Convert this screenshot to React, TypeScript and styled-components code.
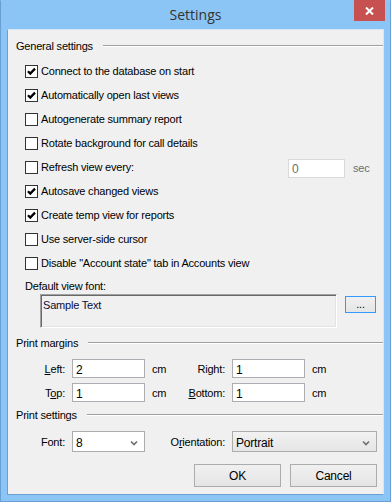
import React from "react";
import styled, { createGlobalStyle } from "styled-components";

const GlobalStyle = createGlobalStyle`
  html, body {
    margin: 0;
    padding: 0;
    background: #ffffff;
  }
  body {
    font-family: "Liberation Sans", Arial, sans-serif;
    font-size: 11px;
    letter-spacing: -0.2px;
    color: #000;
  }
`;

const Window = styled.div`
  width: 391px;
  height: 502px;
  box-sizing: border-box;
  display: flex;
  flex-direction: column;
  background: #8bc5f6;
  border: 1px solid #6a9fd6;
  border-top-color: #8bc5f6;
  padding: 0 6px 6px 6px;
`;

const TitleBar = styled.div`
  height: 28px;
  display: flex;
  align-items: center;
`;

const TitleSide = styled.div`
  flex: 1 1 0;
  align-self: stretch;
  display: flex;
  justify-content: flex-end;
  align-items: flex-start;
`;

const Title = styled.div`
  font-family: "Open Sans", "Noto Sans", sans-serif;
  font-size: 14px;
  letter-spacing: 0;
  color: #333333;
  padding-bottom: 1px;
`;

const CloseButton = styled.div`
  flex: 0 0 31px;
  min-width: 31px;
  height: 21px;
  margin-top: -1px;
  margin-right: -1px;
  background: #c75050;
  display: flex;
  align-items: center;
  justify-content: center;
`;

const Client = styled.div`
  flex: 1;
  display: flex;
  flex-direction: column;
  background: #f0f0f0;
  border: 1px solid;
  border-color: #d8e6f3 #d8e6f3 #6a9fd6 #6a9fd6;
  padding: 9px 0 0 8px;
`;

const HeaderRow = styled.div<{ $top?: number }>`
  display: flex;
  align-items: center;
  gap: 10px;
  height: 13px;
  margin-top: ${(p) => p.$top ?? 0}px;
`;

const GroupLine = styled.div`
  flex: 1;
  height: 1px;
  background: #a0a0a0;
  border-bottom: 1px solid #ffffff;
  margin-top: 1px;
`;

function GroupHeader({ label, top }: { label: string; top?: number }) {
  return (
    <HeaderRow $top={top}>
      <span>{label}</span>
      <GroupLine />
    </HeaderRow>
  );
}

const CheckList = styled.div`
  margin-top: 7px;
  padding-left: 9px;
  display: flex;
  flex-direction: column;
`;

const CheckRow = styled.div`
  display: flex;
  align-items: center;
  height: 24px;
`;

const Box = styled.span`
  width: 13px;
  height: 13px;
  box-sizing: border-box;
  border: 1px solid #333333;
  background: #ffffff;
  display: flex;
  align-items: center;
  justify-content: center;
  margin-right: 3px;
  flex-shrink: 0;
`;

function CheckBox({ checked }: { checked: boolean }) {
  return (
    <Box>
      {checked && (
        <svg width="11" height="11" viewBox="0 0 11 11">
          <polyline
            points="2,5.2 4.3,7.6 9,2.6"
            fill="none"
            stroke="#000"
            strokeWidth="2.3"
          />
        </svg>
      )}
    </Box>
  );
}

const TextBox = styled.div<{ $width: number; $disabled?: boolean }>`
  width: ${(p) => p.$width}px;
  height: 19px;
  box-sizing: border-box;
  border: 1px solid ${(p) => (p.$disabled ? "#d9d9d9" : "#abadb3")};
  background: #ffffff;
  color: ${(p) => (p.$disabled ? "#6d6d6d" : "#000")};
  display: flex;
  align-items: center;
  padding: 2px 3px 0;
  font-size: 12px;
`;

const Unit = styled.span<{ $muted?: boolean }>`
  color: ${(p) => (p.$muted ? "#6d6d6d" : "#000")};
`;

const RefreshInput = styled.div`
  margin-left: auto;
  display: flex;
  align-items: center;
  gap: 8px;
  width: 95px;
  margin-top: 2px;
`;

const FieldLabel = styled.div`
  margin-top: 5px;
  padding-left: 9px;
  height: 13px;
  line-height: 13px;
`;

const FontRow = styled.div`
  display: flex;
  align-items: flex-start;
  gap: 8px;
  margin-top: 1px;
  padding-left: 24px;
`;

const SamplePreview = styled.div`
  width: 297px;
  height: 34px;
  box-sizing: border-box;
  border: 1px solid;
  border-color: #a0a0a0 #ffffff #ffffff #a0a0a0;
  box-shadow: inset 1px 1px 0 #696969, inset -1px -1px 0 #e3e3e3;
  background: #f0f0f0;
  color: #0b0b3a;
  padding: 4px 0 0 2px;
`;

const DialogButton = styled.div<{ $width: number; $height: number; $focused?: boolean }>`
  width: ${(p) => p.$width}px;
  height: ${(p) => p.$height}px;
  box-sizing: border-box;
  border: 1px solid ${(p) => (p.$focused ? "#3399ff" : "#acacac")};
  background: linear-gradient(#f0f0f0, #e5e5e5);
  display: flex;
  align-items: center;
  justify-content: center;
  font-size: 12px;
`;

const BrowseButton = styled(DialogButton)`
  margin-top: 2px;
  align-items: flex-end;
  padding-bottom: 2px;
  font-size: 11px;
`;

const MarginGrid = styled.div`
  display: grid;
  grid-template-columns: 49px 73px 25px 41px 73px auto;
  grid-auto-rows: 19px;
  column-gap: 7px;
  row-gap: 5px;
  align-items: center;
  margin-top: 10px;
`;

const GridLabel = styled.span`
  text-align: right;
  white-space: nowrap;
`;

const PrintRow = styled.div`
  display: grid;
  grid-template-columns: 49px 73px 73px 145px;
  column-gap: 7px;
  align-items: center;
  margin-top: 10px;
`;

const SelectBox = styled.div<{ $width: number; $flat?: boolean }>`
  width: ${(p) => p.$width}px;
  height: 21px;
  box-sizing: border-box;
  border: 1px solid #acacac;
  background: ${(p) => (p.$flat ? "#ffffff" : "linear-gradient(#f2f2f2, #e5e5e5)")};
  display: flex;
  align-items: center;
  justify-content: space-between;
  padding: 2px 6px 0 3px;
  font-size: 12px;
`;

function Select({ value, width, flat }: { value: string; width: number; flat?: boolean }) {
  return (
    <SelectBox $width={width} $flat={flat}>
      <span>{value}</span>
      <svg width="8" height="6" viewBox="0 0 8 6">
        <polyline points="1,1.5 4,4.5 7,1.5" fill="none" stroke="#707070" strokeWidth="1.7" />
      </svg>
    </SelectBox>
  );
}

const ButtonBar = styled.div`
  display: flex;
  justify-content: flex-end;
  gap: 9px;
  margin-top: 12px;
  padding-right: 6px;
`;

const options = [
  { label: "Connect to the database on start", checked: true },
  { label: "Automatically open last views", checked: true },
  { label: "Autogenerate summary report", checked: false },
  { label: "Rotate background for call details", checked: false },
  { label: "Refresh view every:", checked: false, refresh: true },
  { label: "Autosave changed views", checked: true },
  { label: "Create temp view for reports", checked: true },
  { label: "Use server-side cursor", checked: false },
  { label: 'Disable "Account state" tab in Accounts view', checked: false },
];

export default function App() {
  return (
    <>
      <GlobalStyle />
      <Window>
        <TitleBar>
          <TitleSide />
          <Title>Settings</Title>
          <TitleSide>
            <CloseButton>
              <svg width="9" height="8" viewBox="0 0 9 8">
                <path d="M1 0.5 L8 7.5 M8 0.5 L1 7.5" stroke="#fff" strokeWidth="2" />
              </svg>
            </CloseButton>
          </TitleSide>
        </TitleBar>
        <Client>
          <GroupHeader label="General settings" />
          <CheckList>
            {options.map((o) => (
              <CheckRow key={o.label}>
                <CheckBox checked={o.checked} />
                <span>{o.label}</span>
                {o.refresh && (
                  <RefreshInput>
                    <TextBox $width={57} $disabled>
                      0
                    </TextBox>
                    <Unit $muted>sec</Unit>
                  </RefreshInput>
                )}
              </CheckRow>
            ))}
          </CheckList>
          <FieldLabel>Default view font:</FieldLabel>
          <FontRow>
            <SamplePreview>Sample Text</SamplePreview>
            <BrowseButton $width={31} $height={17} $focused>
              ...
            </BrowseButton>
          </FontRow>

          <GroupHeader label="Print margins" top={8} />
          <MarginGrid>
            <GridLabel>
              <u>L</u>eft:
            </GridLabel>
            <TextBox $width={73}>2</TextBox>
            <Unit>cm</Unit>
            <GridLabel>
              Ri<u>g</u>ht:
            </GridLabel>
            <TextBox $width={73}>1</TextBox>
            <Unit>cm</Unit>
            <GridLabel>
              T<u>o</u>p:
            </GridLabel>
            <TextBox $width={73}>1</TextBox>
            <Unit>cm</Unit>
            <GridLabel>
              <u>B</u>ottom:
            </GridLabel>
            <TextBox $width={73}>1</TextBox>
            <Unit>cm</Unit>
          </MarginGrid>

          <GroupHeader label="Print settings" top={6} />
          <PrintRow>
            <GridLabel>Font:</GridLabel>
            <Select value="8" width={73} flat />
            <GridLabel>
              O<u>r</u>ientation:
            </GridLabel>
            <Select value="Portrait" width={145} />
          </PrintRow>

          <ButtonBar>
            <DialogButton $width={87} $height={23}>
              OK
            </DialogButton>
            <DialogButton $width={87} $height={23}>
              Cancel
            </DialogButton>
          </ButtonBar>
        </Client>
      </Window>
    </>
  );
}
